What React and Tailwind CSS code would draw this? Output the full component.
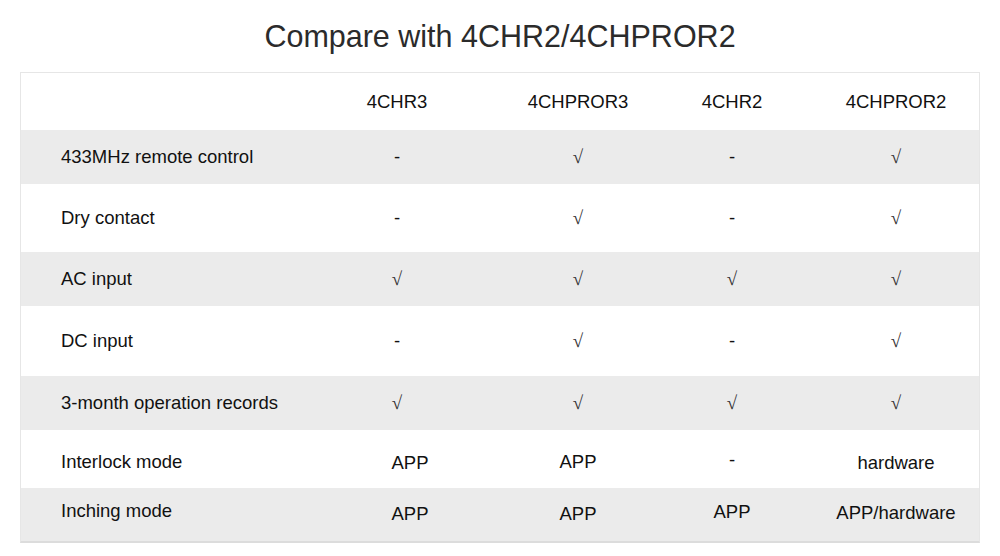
import React from 'react';

const columns = ['4CHR3', '4CHPROR3', '4CHR2', '4CHPROR2'];

// h = row height in px, gray = shaded row, nudge = per-cell vertical tweak (label + 4 values)
const rows = [
  { label: '433MHz remote control', values: ['-', '√', '-', '√'], h: 'h-[54px]', gray: true },
  { label: 'Dry contact', values: ['-', '√', '-', '√'], h: 'h-[68px]', gray: false },
  { label: 'AC input', values: ['√', '√', '√', '√'], h: 'h-[54px]', gray: true },
  { label: 'DC input', values: ['-', '√', '-', '√'], h: 'h-[70px]', gray: false },
  { label: '3-month operation records', values: ['√', '√', '√', '√'], h: 'h-[54px]', gray: true },
  {
    label: 'Interlock mode',
    values: ['APP', 'APP', '-', 'hardware'],
    h: 'h-[58px]',
    gray: false,
    nudge: ['pt-[6px]', 'pt-[7px]', 'pt-[6px]', 'pt-[2px]', 'pt-[7px]'],
  },
  {
    label: 'Inching mode',
    values: ['APP', 'APP', 'APP', 'APP/hardware'],
    h: 'h-[53px]',
    gray: true,
    nudge: ['pb-[8px]', 'pb-[1px]', 'pb-[1px]', 'pb-[6px]', 'pb-[4px]'],
  },
];

const grid = 'grid grid-cols-[288px_176px_186px_122px_186px]';

const Cell = ({ value, index, nudge = '' }) => {
  const isCheck = value === '√';
  const shift = index === 3 ? 'pl-5' : index === 0 && value === 'APP' ? 'pl-[26px]' : '';
  return (
    <div className={`flex items-center justify-center ${shift} ${nudge}`}>
      {isCheck ? (
        <span className="text-[19px] text-[#333] font-['Liberation_Serif',serif]">√</span>
      ) : (
        <span className="text-[18.5px] text-[#111]">{value}</span>
      )}
    </div>
  );
};

const App = () => {
  return (
    <div className="w-[1000px] h-[556px] bg-white font-['Liberation_Sans',Arial,sans-serif]">
      {/* Title */}
      <div className="h-[72px] flex items-center justify-center">
        <h1 className="text-[30.5px] text-[#2b2b2b] leading-none">Compare with 4CHR2/4CHPROR2</h1>
      </div>

      {/* Table */}
      <div className="mx-5 border border-[#e6e6e6] border-b-[#dcdcdc] border-b-2">
        <div className={`${grid} h-[57px]`}>
          <div />
          {columns.map((c, i) => (
            <div key={c} className={`flex items-center justify-center text-[18.5px] text-[#111] ${i === 3 ? 'pl-5' : ''}`}>
              {c}
            </div>
          ))}
        </div>
        {rows.map((r) => (
          <div key={r.label} className={`${grid} ${r.h} ${r.gray ? 'bg-[#ebebeb]' : 'bg-white'}`}>
            <div className={`flex items-center pl-10 text-[18.5px] text-[#111] ${r.nudge ? r.nudge[0] : ''}`}>
              {r.label}
            </div>
            {r.values.map((v, i) => (
              <Cell key={i} value={v} index={i} nudge={r.nudge ? r.nudge[i + 1] : ''} />
            ))}
          </div>
        ))}
      </div>
    </div>
  );
};

export default App;
